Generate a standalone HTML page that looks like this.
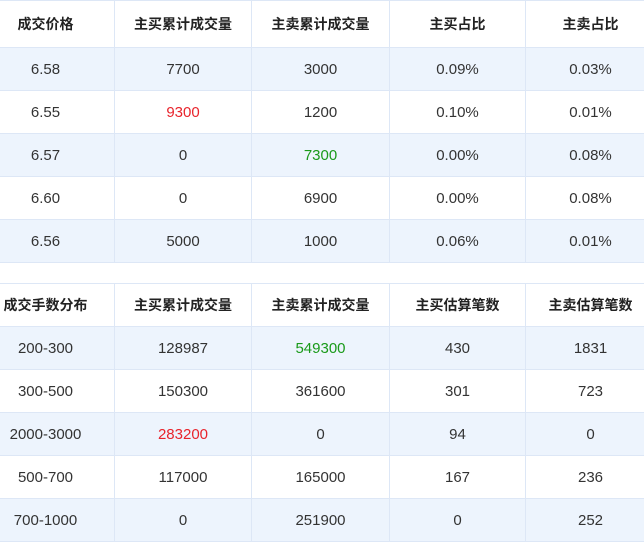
<!DOCTYPE html>
<html><head><meta charset="utf-8"><style>
html,body{margin:0;padding:0;width:644px;height:538px;overflow:hidden;background:#fff;}
table{position:absolute;left:-24px;width:679px;border-collapse:collapse;table-layout:fixed;font-family:"Liberation Sans","Noto Sans CJK SC",sans-serif;font-size:15px;color:#333;}
td,th{border:1px solid #dde7f6;text-align:center;padding:0;height:42px;}
th{font-weight:bold;color:#222;background:#fff;font-size:14px;}
tr.b td{background:#edf4fd;}
.r{color:#e8242c}.g{color:#1a9a1a}
</style></head><body>
<table style="top:0">
<colgroup><col style="width:138px"><col style="width:137px"><col style="width:138px"><col style="width:136px"><col style="width:130px"></colgroup>
<tr><th style="height:46px">成交价格</th><th>主买累计成交量</th><th>主卖累计成交量</th><th>主买占比</th><th>主卖占比</th></tr>
<tr class="b"><td>6.58</td><td>7700</td><td>3000</td><td>0.09%</td><td>0.03%</td></tr>
<tr><td>6.55</td><td class="r">9300</td><td>1200</td><td>0.10%</td><td>0.01%</td></tr>
<tr class="b"><td>6.57</td><td>0</td><td class="g">7300</td><td>0.00%</td><td>0.08%</td></tr>
<tr><td>6.60</td><td>0</td><td>6900</td><td>0.00%</td><td>0.08%</td></tr>
<tr class="b"><td>6.56</td><td>5000</td><td>1000</td><td>0.06%</td><td>0.01%</td></tr>
</table>
<table style="top:283px">
<colgroup><col style="width:138px"><col style="width:137px"><col style="width:138px"><col style="width:136px"><col style="width:130px"></colgroup>
<tr><th>成交手数分布</th><th>主买累计成交量</th><th>主卖累计成交量</th><th>主买估算笔数</th><th>主卖估算笔数</th></tr>
<tr class="b"><td>200-300</td><td>128987</td><td class="g">549300</td><td>430</td><td>1831</td></tr>
<tr><td>300-500</td><td>150300</td><td>361600</td><td>301</td><td>723</td></tr>
<tr class="b"><td>2000-3000</td><td class="r">283200</td><td>0</td><td>94</td><td>0</td></tr>
<tr><td>500-700</td><td>117000</td><td>165000</td><td>167</td><td>236</td></tr>
<tr class="b"><td>700-1000</td><td>0</td><td>251900</td><td>0</td><td>252</td></tr>
</table>
</body></html>
